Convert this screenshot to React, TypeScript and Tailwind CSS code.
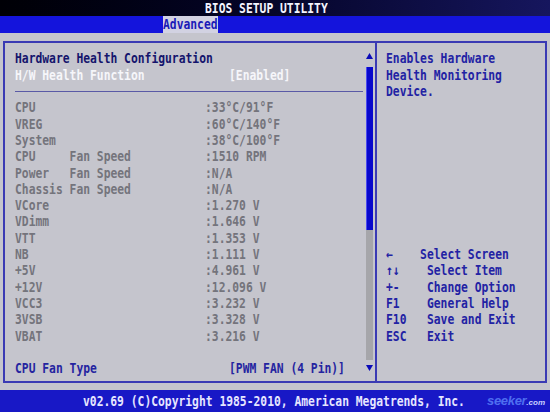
import React from "react";

const T = "inline-block origin-center scale-y-[1.22] whitespace-pre";

function Row({ children, className = "" }: { children?: React.ReactNode; className?: string }) {
  return <div className={"flex h-[16.3px] shrink-0 items-center leading-none " + className}>{children}</div>;
}

const sensors: [string, string][] = [
  ["CPU", ":33°C/91°F"],
  ["VREG", ":60°C/140°F"],
  ["System", ":38°C/100°F"],
  ["CPU     Fan Speed", ":1510 RPM"],
  ["Power   Fan Speed", ":N/A"],
  ["Chassis Fan Speed", ":N/A"],
  ["VCore", ":1.270 V"],
  ["VDimm", ":1.646 V"],
  ["VTT", ":1.353 V"],
  ["NB", ":1.111 V"],
  ["+5V", ":4.961 V"],
  ["+12V", ":12.096 V"],
  ["VCC3", ":3.232 V"],
  ["3VSB", ":3.328 V"],
  ["VBAT", ":3.216 V"],
];

const keys: [string, string][] = [
  ["←    ", "Select Screen"],
  ["↑↓    ", "Select Item"],
  ["+-    ", "Change Option"],
  ["F1    ", "General Help"],
  ["F10   ", "Save and Exit"],
  ["ESC   ", "Exit"],
];

export default function App() {
  return (
    <div className="flex h-[412px] w-[550px] flex-col overflow-hidden bg-[#c5c5cd] font-['DejaVu_Sans_Mono','Liberation_Mono',monospace] text-[11.33px] font-bold">
      {/* title bar */}
      <div className="flex h-[16px] items-center bg-linear-to-r from-[#000006] via-[#06062a] to-[#16165e] pl-[205px] text-[#f4f4ff]">
        <span className={T}>BIOS SETUP UTILITY</span>
      </div>
      {/* tab bar */}
      <div className="flex h-[17px] items-stretch bg-[#1414dc] pl-[163px]">
        <div className="flex w-[55px] items-center bg-[#d2d2e2] text-[#1a1ab8]">
          <span className={T}>Advanced</span>
        </div>
      </div>
      {/* main */}
      <div className="flex flex-1 flex-col px-[3px] pt-[8px] pb-[7px]">
        <div className="flex flex-1 border-2 border-[#3a3ab4]">
          {/* left panel */}
          <div className="flex w-[370px] shrink-0">
            <div className="flex flex-1 flex-col pl-[10px] pt-[8px]">
              <Row className="text-[#14146c]">
                <span className={T}>Hardware Health Configuration</span>
              </Row>
              <Row className="text-[#f6f6fa]">
                <span className={T + " w-[214px]"}>H/W Health Function</span>
                <span className={T}>[Enabled]</span>
              </Row>
              <Row>
                <div className="h-px w-[348px] bg-[#5a5aa6]" />
              </Row>
              {sensors.map(([l, v]) => (
                <Row key={l} className="text-[#74747c]">
                  <span className={T + " w-[190px]"}>{l}</span>
                  <span className={T}>{v}</span>
                </Row>
              ))}
              <Row />
              <Row className="text-[#2424a0]">
                <span className={T + " w-[214px]"}>CPU Fan Type</span>
                <span className={T}>[PWM FAN (4 Pin)]</span>
              </Row>
            </div>
            {/* scrollbar */}
            <div className="mr-[2px] flex w-[7px] flex-col items-center pt-[10px]">
              <svg width="7" height="6" viewBox="0 0 7 6">
                <polygon points="3.5,0 7,6 0,6" fill="#0a0ab8" />
              </svg>
              <div className="mt-[8px] h-[163px] w-[7px] border-l border-[#4a4af0] bg-[#0808cc]" />
              <div className="h-[130px] w-[7px] bg-[#a6a6aa]" />
              <svg className="mt-[5px]" width="7" height="6" viewBox="0 0 7 6">
                <polygon points="0,0 7,0 3.5,6" fill="#0a0ab8" />
              </svg>
            </div>
          </div>
          {/* right panel */}
          <div className="flex flex-1 flex-col border-l-2 border-[#3a3ab4] pl-[9px] pt-[8px] text-[#2222a4]">
            <Row><span className={T}>Enables Hardware</span></Row>
            <Row><span className={T}>Health Monitoring</span></Row>
            <Row><span className={T}>Device.</span></Row>
            {Array.from({ length: 9 }).map((_, i) => (
              <Row key={i} />
            ))}
            {keys.map(([k, d]) => (
              <Row key={d}>
                <span className={T}>{k}</span>
                <span className={T}>{d}</span>
              </Row>
            ))}
          </div>
        </div>
      </div>
      {/* footer */}
      <div className="relative flex h-[22px] items-center bg-[#1818c6] pl-[83px] text-[#e6e6ff]">
        <span className={T}>v02.69 (C)Copyright 1985-2010, American Megatrends, Inc.</span>
        <span className="absolute right-[5px] top-[4px] flex items-baseline font-['Liberation_Sans',sans-serif] italic leading-[14px]">
          <span className="text-[13px] font-bold tracking-tight text-[#4f6ff0]">seeker</span>
          <span className="text-[8px] font-bold text-[#c8d0ff]">.com</span>
        </span>
      </div>
    </div>
  );
}
